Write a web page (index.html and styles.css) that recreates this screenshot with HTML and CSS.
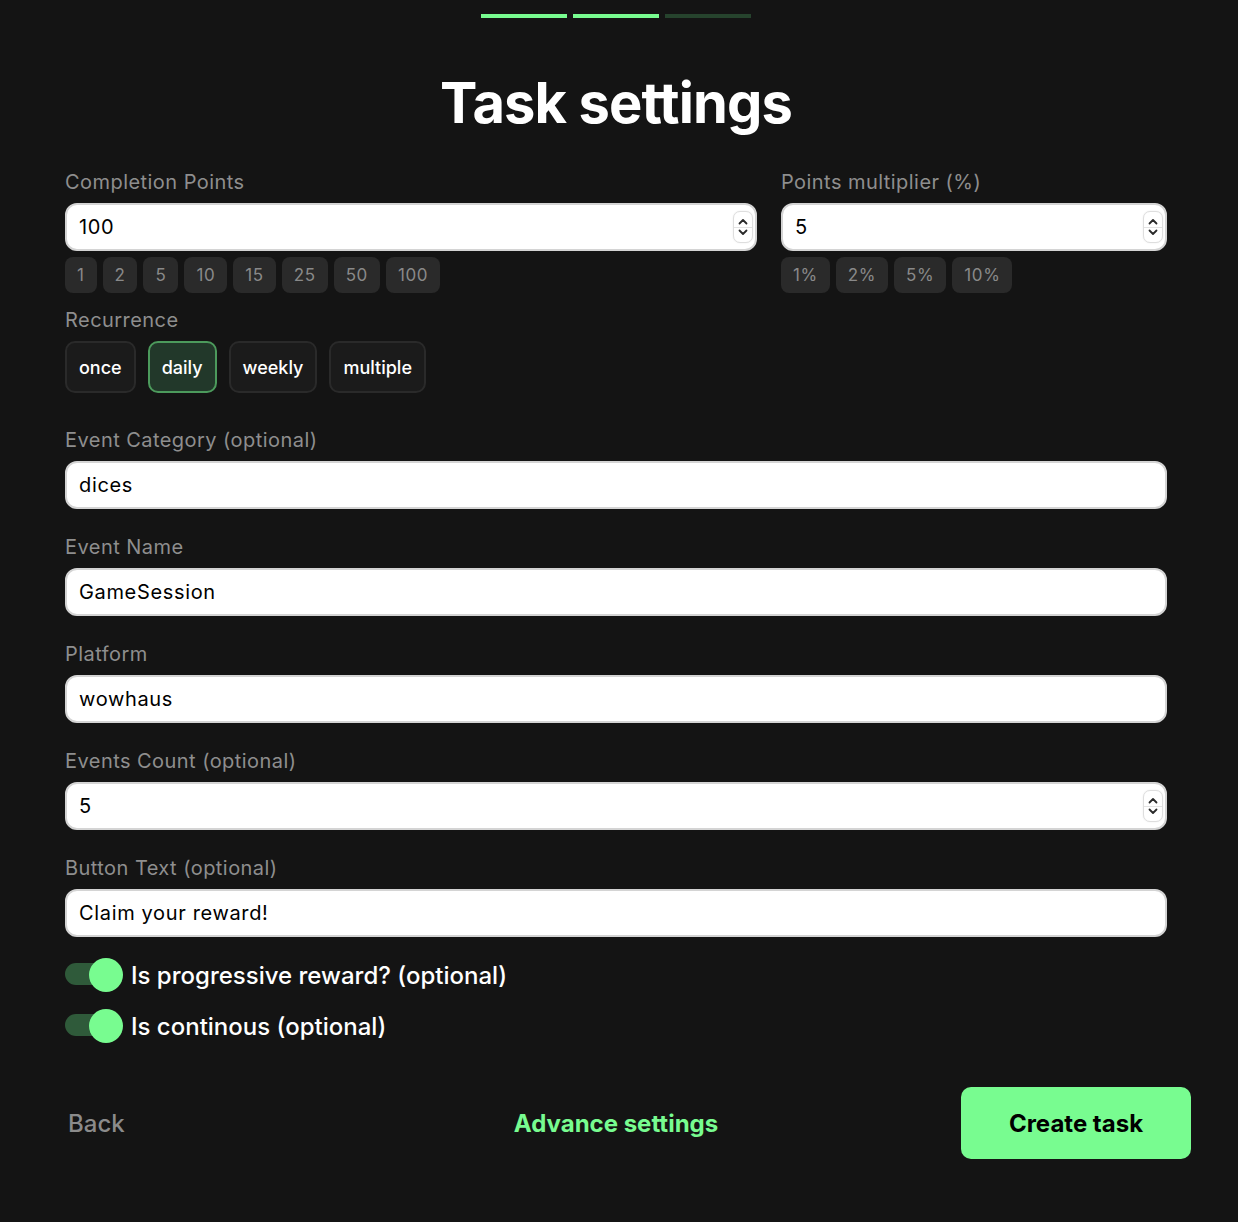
FILE: index.html
```html
<!DOCTYPE html>
<html lang="en">
<head>
<meta charset="utf-8">
<title>Task settings</title>
<link rel="stylesheet" href="styles.css">
</head>
<body>
<div class="page">
  <div class="steps">
    <span class="step done"></span>
    <span class="step done"></span>
    <span class="step"></span>
  </div>

  <h1 class="title">Task settings</h1>

  <form class="form">
    <div class="row-two">
      <div class="field">
        <label class="label">Completion Points</label>
        <div class="input-wrap">
          <input class="input" type="text" value="100">
          <span class="stepper"><svg viewBox="0 0 20 32" width="20" height="32"><path d="M6.5 12.5 10 9l3.5 3.5" /><path d="M6.5 19.5 10 23l3.5-3.5" /></svg></span>
        </div>
        <div class="chips">
          <button type="button" class="chip">1</button>
          <button type="button" class="chip">2</button>
          <button type="button" class="chip">5</button>
          <button type="button" class="chip">10</button>
          <button type="button" class="chip">15</button>
          <button type="button" class="chip">25</button>
          <button type="button" class="chip">50</button>
          <button type="button" class="chip">100</button>
        </div>
      </div>
      <div class="field">
        <label class="label">Points multiplier (%)</label>
        <div class="input-wrap">
          <input class="input" type="text" value="5">
          <span class="stepper"><svg viewBox="0 0 20 32" width="20" height="32"><path d="M6.5 12.5 10 9l3.5 3.5" /><path d="M6.5 19.5 10 23l3.5-3.5" /></svg></span>
        </div>
        <div class="chips">
          <button type="button" class="chip">1%</button>
          <button type="button" class="chip">2%</button>
          <button type="button" class="chip">5%</button>
          <button type="button" class="chip">10%</button>
        </div>
      </div>
    </div>

    <div class="field recurrence">
      <label class="label">Recurrence</label>
      <div class="options">
        <button type="button" class="option">once</button>
        <button type="button" class="option active">daily</button>
        <button type="button" class="option">weekly</button>
        <button type="button" class="option">multiple</button>
      </div>
    </div>

    <div class="fields">
      <div class="field">
        <label class="label">Event Category (optional)</label>
        <input class="input" type="text" value="dices">
      </div>
      <div class="field">
        <label class="label">Event Name</label>
        <input class="input" type="text" value="GameSession">
      </div>
      <div class="field">
        <label class="label">Platform</label>
        <input class="input" type="text" value="wowhaus">
      </div>
      <div class="field">
        <label class="label">Events Count (optional)</label>
        <div class="input-wrap">
          <input class="input" type="text" value="5">
          <span class="stepper"><svg viewBox="0 0 20 32" width="20" height="32"><path d="M6.5 12.5 10 9l3.5 3.5" /><path d="M6.5 19.5 10 23l3.5-3.5" /></svg></span>
        </div>
      </div>
      <div class="field">
        <label class="label">Button Text (optional)</label>
        <input class="input" type="text" value="Claim your reward!">
      </div>
    </div>

    <div class="toggles">
      <label class="toggle-row">
        <span class="toggle on"><span class="thumb"></span></span>
        <span class="toggle-text">Is progressive reward? (optional)</span>
      </label>
      <label class="toggle-row">
        <span class="toggle on"><span class="thumb"></span></span>
        <span class="toggle-text">Is continous (optional)</span>
      </label>
    </div>
  </form>

  <div class="actions">
    <button type="button" class="btn-back">Back</button>
    <button type="button" class="btn-advance">Advance settings</button>
    <button type="button" class="btn-create">Create task</button>
  </div>
</div>
</body>
</html>
```

FILE: styles.css
```css
* {
  box-sizing: border-box;
}

html, body {
  margin: 0;
  background: #141414;
}

body {
  font-family: Inter, "Noto Sans", sans-serif;
  color: #ffffff;
}

button {
  font-family: inherit;
  cursor: pointer;
}

.page {
  width: 1150px;
  margin-left: 41px;
  padding-top: 14px;
  padding-bottom: 63px;
}

/* progress indicator */
.steps {
  display: flex;
  justify-content: center;
  gap: 6px;
}

.step {
  width: 86px;
  height: 4px;
  background: #26432d;
}

.step.done {
  background: #78fc90;
}

.title {
  margin: 51px 0 0;
  text-align: center;
  font-size: 56px;
  line-height: 68px;
  font-weight: 700;
  letter-spacing: -0.9px;
}

.form {
  padding: 0 24px;
  margin-top: 33px;
}

.row-two {
  display: grid;
  grid-template-columns: 692px 386px;
  column-gap: 24px;
}

.field {
  display: flex;
  flex-direction: column;
}

.label {
  font-size: 20px;
  line-height: 24px;
  color: #8e8e8e;
  letter-spacing: 0.45px;
  margin-bottom: 9px;
}

.input-wrap {
  position: relative;
}

.input {
  width: 100%;
  height: 48px;
  border: 2px solid #d4d4d4;
  border-radius: 12px;
  background: #ffffff;
  padding: 0 12px;
  font-family: inherit;
  font-size: 20px;
  letter-spacing: 0.65px;
  color: #000000;
  outline: none;
}

/* number stepper drawn over the input's right edge */
.stepper {
  position: absolute;
  right: 4px;
  top: 8px;
  width: 20px;
  height: 32px;
  border: 1px solid #dedede;
  border-radius: 7px;
  background: #ffffff;
  box-shadow: 0 0 2px rgba(0, 0, 0, 0.08);
}

.stepper::after {
  content: "";
  position: absolute;
  left: 0;
  right: 0;
  top: 15px;
  height: 1px;
  background: #e2e2e2;
}

.stepper svg {
  position: absolute;
  left: -1px;
  top: -1px;
  fill: none;
  stroke: #2a2a2a;
  stroke-width: 1.8;
  stroke-linecap: round;
  stroke-linejoin: round;
}

.chips {
  display: flex;
  gap: 6px;
  margin-top: 6px;
}

.chip {
  height: 36px;
  padding: 0 12px;
  border: none;
  border-radius: 8px;
  background: #2a2a2a;
  color: #898989;
  font-size: 17px;
  letter-spacing: 0.6px;
}

.recurrence {
  margin-top: 15px;
}

.options {
  display: flex;
  gap: 12px;
}

.option {
  height: 52px;
  padding: 0 12px;
  border: 2px solid #2a2a2a;
  border-radius: 10px;
  background: #1b1b1b;
  color: #ffffff;
  font-size: 18px;
  font-weight: 500;
}

.option.active {
  background: #22382a;
  border-color: #4c9a5c;
}

.fields {
  display: flex;
  flex-direction: column;
  gap: 26px;
  margin-top: 35px;
}

.toggles {
  display: flex;
  flex-direction: column;
  gap: 17px;
  margin-top: 21px;
}

.toggle-row {
  display: flex;
  align-items: center;
  gap: 8px;
  height: 34px;
}

.toggle {
  position: relative;
  width: 58px;
  height: 34px;
  flex: none;
}

.toggle::before {
  content: "";
  position: absolute;
  left: 0;
  top: 5px;
  width: 46px;
  height: 22px;
  border-radius: 11px;
  background: #2f5a3a;
}

.thumb {
  position: absolute;
  left: 24px;
  top: 0;
  width: 34px;
  height: 34px;
  border-radius: 50%;
  background: #78fc90;
}

.toggle-text {
  font-size: 24px;
  font-weight: 500;
  color: #ffffff;
}

.actions {
  display: flex;
  align-items: center;
  justify-content: space-between;
  margin-top: 44px;
}

.btn-back {
  width: 230px;
  height: 72px;
  padding: 0 0 0 27px;
  text-align: left;
  border: none;
  background: transparent;
  color: #8b8b8b;
  font-size: 24px;
  font-weight: 500;
}

.btn-advance {
  border: none;
  background: transparent;
  color: #78fc90;
  font-size: 24px;
  font-weight: 700;
}

.btn-create {
  width: 230px;
  height: 72px;
  border: none;
  border-radius: 10px;
  background: #78fc90;
  color: #000000;
  font-size: 24px;
  font-weight: 700;
}
```
